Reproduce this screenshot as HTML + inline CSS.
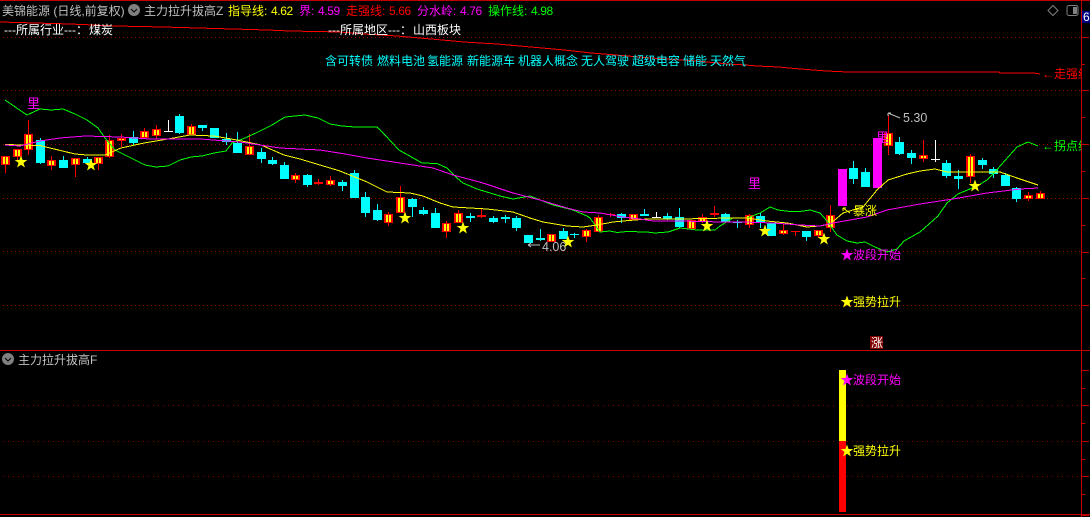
<!DOCTYPE html>
<html><head><meta charset="utf-8">
<style>
html,body{margin:0;padding:0;background:#000;width:1090px;height:517px;overflow:hidden}
svg{display:block;position:absolute;left:0;top:0}
text{font-family:"Liberation Sans","WenQuanYi Zen Hei","Noto Sans CJK SC",sans-serif;font-size:12px;white-space:pre}
polyline{shape-rendering:crispEdges}
</style></head>
<body>
<svg width="1090" height="517" viewBox="0 0 1090 517" xmlns="http://www.w3.org/2000/svg">
<defs>
<polygon id="s" points="0,-6.5 1.6,-2 6.3,-2 2.5,.9 3.9,5.5 0,2.7 -3.9,5.5 -2.5,.9 -6.3,-2 -1.6,-2"/>
<clipPath id="c"><rect x="0" y="0" width="1081" height="517"/></clipPath>
</defs>
<rect width="1090" height="517" fill="#000"/>

<!-- grid -->
<g stroke="#a00000" stroke-width="1" stroke-dasharray="1 3" fill="none">
<path d="M3 37.5H1081M3 90.5H1081M3 144.5H1081M3 198.5H1081M3 251.5H1081M3 305.5H1081"/>
</g>
<g stroke="#800000" stroke-width="1" stroke-dasharray="1 4" fill="none">
<path d="M3 405.5H838M847 405.5H1081M3 441.5H838M847 441.5H1081M3 476.5H838M847 476.5H1081"/>
</g>

<!-- frame -->
<g shape-rendering="crispEdges" fill="#c00000">
<rect x="0" y="0" width="1090" height="1"/>
<rect x="0" y="350" width="1090" height="1"/>
<rect x="0" y="514" width="1090" height="1"/>
<rect x="1081" y="0" width="1" height="517"/>
<path d="M1082 37h7v1h-7zM1082 64h3v1h-3zM1082 90h7v1h-7zM1082 117h3v1h-3zM1082 144h7v1h-7zM1082 171h3v1h-3zM1082 198h7v1h-7zM1082 225h3v1h-3zM1082 252h7v1h-7zM1082 278h3v1h-3zM1082 305h7v1h-7zM1082 370h7v1h-7zM1082 388h3v1h-3zM1082 405h7v1h-7zM1082 423h3v1h-3zM1082 441h7v1h-7zM1082 459h3v1h-3zM1082 476h7v1h-7zM1082 494h3v1h-3zM1082 514h7v2h-7z"/>
</g>

<!-- red top line -->
<polyline fill="none" stroke="#ff0000" stroke-width="1" points="0,22 70,24 116,26 163,27 233,29 267,30 290,31 340,32 364,34 397,36 431,39 464,42 497,44 531,47 564,50 591,53 604,54 651,58 697,61 728,64 746,65 756,66 779,67 789,68 813,70 826,71 848,72 999,72 1000,73 1034,73 1040,74"/>

<!-- magenta bars -->
<g shape-rendering="crispEdges" fill="#ff00ff">
<rect x="838" y="169" width="9" height="37"/>
<rect x="873" y="138" width="9" height="50"/>
</g>

<!-- red candle bodies -->
<path shape-rendering="crispEdges" fill="#ff0000" d="M1 156h9v9h-9zM13 149h9v8h-9zM24 134h9v16h-9zM47 160h9v6h-9zM71 158h9v7h-9zM94 157h9v7h-9zM105 140h9v17h-9zM117 138h9v3h-9zM140 131h9v7h-9zM152 129h9v7h-9zM187 126h9v9h-9zM245 146h9v9h-9zM291 175h9v5h-9zM314 182h9v2h-9zM326 180h9v5h-9zM384 214h9v9h-9zM396 197h9v16h-9zM442 223h9v9h-9zM454 213h9v10h-9zM477 215h9v2h-9zM547 234h9v8h-9zM582 230h9v7h-9zM594 217h9v15h-9zM606 214h9v1h-9zM629 214h9v6h-9zM687 220h9v9h-9zM698 217h9v5h-9zM710 213h9v2h-9zM745 215h9v10h-9zM779 230h9v4h-9zM791 231h9v1h-9zM814 230h9v6h-9zM826 215h9v13h-9zM884 133h9v13h-9zM919 155h9v4h-9zM966 156h9v21h-9zM1024 195h9v4h-9zM1036 193h9v6h-9z"/>
<!-- yellow stripes -->
<path shape-rendering="crispEdges" fill="#ffff00" d="M3 157h5v7h-5zM15 150h5v6h-5zM26 135h5v14h-5zM49 161h5v4h-5zM73 159h5v5h-5zM96 158h5v5h-5zM107 141h5v15h-5zM119 139h5v1h-5zM142 132h5v5h-5zM154 130h5v5h-5zM189 127h5v7h-5zM247 147h5v7h-5zM293 176h5v3h-5zM316 183h5v0h-5zM328 181h5v3h-5zM386 215h5v7h-5zM398 198h5v14h-5zM444 224h5v7h-5zM456 214h5v8h-5zM549 235h5v6h-5zM584 231h5v5h-5zM596 218h5v13h-5zM631 215h5v4h-5zM689 221h5v7h-5zM700 218h5v3h-5zM747 216h5v8h-5zM781 231h5v2h-5zM816 231h5v4h-5zM828 216h5v11h-5zM886 134h5v11h-5zM921 156h5v2h-5zM968 157h5v19h-5zM1026 196h5v2h-5zM1038 194h5v4h-5z"/>
<!-- red wicks -->
<path shape-rendering="crispEdges" fill="#ff0000" d="M5 156h1v17h-1zM17 149h1v11h-1zM28 120h1v35h-1zM51 156h1v14h-1zM75 158h1v19h-1zM98 157h1v13h-1zM109 135h1v23h-1zM121 134h1v13h-1zM144 128h1v11h-1zM156 125h1v14h-1zM191 124h1v11h-1zM249 134h1v21h-1zM295 173h1v10h-1zM318 179h1v6h-1zM330 176h1v10h-1zM388 212h1v14h-1zM400 186h1v27h-1zM446 221h1v17h-1zM458 210h1v13h-1zM481 208h1v10h-1zM551 234h1v8h-1zM586 229h1v13h-1zM598 215h1v17h-1zM610 213h1v4h-1zM633 214h1v6h-1zM691 220h1v9h-1zM702 214h1v9h-1zM714 206h1v11h-1zM749 214h1v14h-1zM783 224h1v11h-1zM795 231h1v5h-1zM818 230h1v8h-1zM830 205h1v27h-1zM888 115h1v40h-1zM923 140h1v22h-1zM970 154h1v29h-1zM1028 192h1v9h-1zM1040 191h1v8h-1z"/>
<!-- cyan candles -->
<path shape-rendering="crispEdges" fill="#00ffff" d="M36 140h9v23h-9zM40 138h1v26h-1zM59 160h9v8h-9zM63 156h1v12h-1zM83 159h9v4h-9zM87 157h1v8h-1zM129 137h9v6h-9zM133 131h1v14h-1zM175 116h9v17h-9zM179 114h1v20h-1zM198 125h9v3h-9zM202 125h1v6h-1zM210 128h9v10h-9zM222 139h9v3h-9zM226 133h1v12h-1zM233 143h9v10h-9zM237 132h1v21h-1zM257 152h9v7h-9zM261 148h1v15h-1zM268 160h9v4h-9zM272 157h1v8h-1zM280 165h9v14h-9zM284 162h1v17h-1zM303 175h9v10h-9zM307 174h1v13h-1zM338 182h9v4h-9zM342 180h1v11h-1zM350 173h9v25h-9zM354 170h1v28h-1zM361 197h9v16h-9zM365 192h1v25h-1zM373 210h9v10h-9zM377 204h1v17h-1zM408 199h9v8h-9zM412 198h1v19h-1zM419 210h9v4h-9zM423 207h1v8h-1zM431 213h9v15h-9zM435 208h1v20h-1zM466 216h9v2h-9zM470 213h1v9h-1zM489 218h9v4h-9zM493 216h1v7h-1zM501 217h9v2h-9zM505 215h1v8h-1zM512 218h9v10h-9zM516 216h1v15h-1zM524 235h9v8h-9zM536 238h9v2h-9zM540 229h1v12h-1zM559 231h9v8h-9zM563 228h1v11h-1zM570 234h9v1h-9zM574 233h1v5h-1zM617 214h9v4h-9zM621 213h1v10h-1zM640 214h9v2h-9zM644 209h1v7h-1zM663 216h9v3h-9zM667 213h1v7h-1zM675 217h9v10h-9zM679 208h1v20h-1zM721 214h9v8h-9zM725 213h1v9h-1zM733 222h9v1h-9zM737 220h1v8h-1zM756 216h9v7h-9zM760 213h1v15h-1zM767 223h9v13h-9zM802 231h9v6h-9zM806 231h1v10h-1zM849 168h9v11h-9zM853 161h1v23h-1zM861 172h9v15h-9zM865 168h1v19h-1zM895 142h9v12h-9zM899 137h1v18h-1zM907 153h9v5h-9zM911 150h1v14h-1zM942 163h9v13h-9zM946 160h1v18h-1zM954 176h9v3h-9zM958 170h1v19h-1zM978 160h9v5h-9zM982 158h1v11h-1zM989 169h9v5h-9zM993 167h1v11h-1zM1001 175h9v11h-9zM1005 173h1v13h-1zM1012 188h9v11h-9zM1016 187h1v15h-1z"/>
<!-- white doji -->
<path shape-rendering="crispEdges" fill="#ffffff" d="M168 120h1v12h-1zM164 131h9v1h-9zM656 212h1v5h-1zM652 217h9v1h-9zM935 140h1v22h-1zM931 159h9v1h-9z"/>

<!-- lines -->
<polyline fill="none" stroke="#00ff00" stroke-width="1" points="5,100 27,115 40,109 51,110 63,109 75,114 87,120 98,128 105,138 115,150 125,155 135,160 145,165 156,167 168,166 180,160 191,157 202,156 214,153 226,151 232,143 245,138 256,133 272,125 285,117 295,116 305,115 318,118 330,124 342,126 355,127 377,127 385,135 399,150 422,163 437,163.5 447,168 457,178 463,183 477,189 500,196 513,199 530,196 553,205 573,210 587,216 590,218 600,232 610,231 617,232.5 627,231.5 647,232 655,233 668,232 680,228 697,230 715,230 720,226 733,218 747,218 760,213 770,207 778,210 790,211.5 800,211.5 810,210 820,213 827,221 837,235 847,241 857,243 865,242 875,247 887,252 897,249 904,241 920,232 938,216 947,203 958,194 977,186 987,180 993,174 1017,147 1028,142 1038,146"/>
<polyline fill="none" stroke="#ffff00" stroke-width="1" points="5,144.5 22,145 40,145.5 50,148 75,154 87,155 105,155 121,148 144,143 168,139 190,135 214,136 237,140 261,145 284,155 300,159 340,171 367,182 387,192 410,193 423,196 440,203 453,207 487,209 513,212 530,218 543,222 567,226 583,227 597,225 613,222 623,221 647,219 680,219 730,218 747,218 767,221 787,223 807,227 820,226 830,224 843,213 863,207 877,190 888,180 907,174 920,171 935,169 947,172 1000,172 1017,178 1038,185"/>
<polyline fill="none" stroke="#ff00ff" stroke-width="1" points="5,145 20,146 40,141 60,138 85,136 120,137 150,139 200,139 240,142 280,148 320,150 345,154 367,158 400,163 433,168 453,175 483,183 513,193 540,200 567,208 583,212 600,213 623,217 640,219 653,221 680,221 723,222 743,222 773,223 800,225 820,226 833,223 867,217 887,210 920,204 953,199 987,193 1020,189 1038,188"/>

<!-- lower bars -->
<g shape-rendering="crispEdges">
<rect x="839" y="370" width="7" height="71" fill="#ffff00"/>
<rect x="839" y="441" width="7" height="71" fill="#ff0000"/>
</g>

<!-- stars -->
<g fill="#ffff00">
<use href="#s" x="21" y="162"/><use href="#s" x="91" y="165"/><use href="#s" x="405" y="218"/><use href="#s" x="463" y="228"/><use href="#s" x="568" y="242"/><use href="#s" x="707" y="226"/><use href="#s" x="765" y="231"/><use href="#s" x="824" y="239"/><use href="#s" x="975" y="186"/>
<use href="#s" x="847" y="302"/><use href="#s" x="847" y="451"/>
</g>
<g fill="#ff00ff"><use href="#s" x="847" y="255"/><use href="#s" x="847" y="380"/></g>

<!-- arrows -->
<path d="M843 208l7 5M843 208h3M843 208v3" stroke="#ffff00" fill="none"/>
<path d="M888 113l12 5M888 113h3M888 113v3M528 245h12M528 245l3-2M528 245l3 2" stroke="#bfbfbf" fill="none"/>

<!-- header -->
<g>
<circle cx="134" cy="10" r="6" fill="#808080"/><path d="M131 9l3 3 3-3" stroke="#000" fill="none"/>
<circle cx="8" cy="359" r="6" fill="#808080"/><path d="M5 358l3 3 3-3" stroke="#000" fill="none"/>
<text x="2" y="15" fill="#c0c0c0">美锦能源 (日线,前复权)</text>
<text x="144" y="15" fill="#c0c0c0">主力拉升拔高Z</text>
<text x="228" y="15" fill="#ffff00">指导线:</text><text x="271" y="15" fill="#ffff00" letter-spacing="-.4">4.62</text>
<text x="299" y="15" fill="#ff00ff">界:</text><text x="318" y="15" fill="#ff00ff" letter-spacing="-.4">4.59</text>
<text x="346" y="15" fill="#ff0000">走强线:</text><text x="389" y="15" fill="#ff0000" letter-spacing="-.4">5.66</text>
<text x="417" y="15" fill="#ff00ff">分水岭:</text><text x="460" y="15" fill="#ff00ff" letter-spacing="-.4">4.76</text>
<text x="488" y="15" fill="#00ff00">操作线:</text><text x="531" y="15" fill="#00ff00" letter-spacing="-.4">4.98</text>
<text x="4" y="34" fill="#ffffff">---所属行业---：</text><text x="89" y="34" fill="#ffffff">煤炭</text>
<text x="328" y="34" fill="#ffffff">---所属地区---：</text><text x="413" y="34" fill="#ffffff">山西板块</text>
<text x="18" y="364" fill="#c0c0c0">主力拉升拔高F</text>
</g>
<!-- concepts -->
<g fill="#00ffff">
<text x="325" y="65">含可转债</text><text x="377" y="65">燃料电池</text><text x="427" y="65">氢能源</text><text x="467" y="65">新能源车</text><text x="518" y="65">机器人概念</text><text x="581" y="65">无人驾驶</text><text x="632" y="65">超级电容</text><text x="683" y="65">储能</text><text x="710" y="65">天然气</text>
</g>
<!-- labels -->
<g clip-path="url(#c)">
<text x="27" y="108" fill="#ff00ff" style="font-size:13px">里</text>
<text x="748" y="188" fill="#ff00ff" style="font-size:13px">里</text>
<text x="876" y="142" fill="#ff00ff" style="font-size:13px">里</text>
<text x="1042" y="78" fill="#ff0000">←走强线</text>
<text x="1042" y="150" fill="#00ff00">←拐点线</text>
</g>
<text x="903" y="122" fill="#bfbfbf" style="font-size:12.5px">5.30</text>
<text x="542" y="251" fill="#bfbfbf" style="font-size:12.5px">4.06</text>
<text x="853" y="215" fill="#ffff00">暴涨</text>
<text x="853" y="259" fill="#ff00ff">波段开始</text>
<text x="853" y="306" fill="#ffff00">强势拉升</text>
<text x="853" y="384" fill="#ff00ff">波段开始</text>
<text x="853" y="455" fill="#ffff00">强势拉升</text>
<rect x="870" y="336" width="13" height="13" fill="#800000"/>
<text x="871" y="347" fill="#ffffff">涨</text>

<!-- window icons -->
<path d="M1053 5.5l5 5-5 5-5-5z" fill="none" stroke="#808080"/>
<rect x="1067" y="5.5" width="11" height="10" rx="2" fill="none" stroke="#808080"/>
<rect x="1073" y="7" width="4" height="7" fill="#808080" shape-rendering="crispEdges"/>
<rect x="1082" y="11" width="8" height="12" fill="#000080" shape-rendering="crispEdges"/>
<text x="1083" y="21" fill="#ffffff">6</text>
</svg>
</body></html>
